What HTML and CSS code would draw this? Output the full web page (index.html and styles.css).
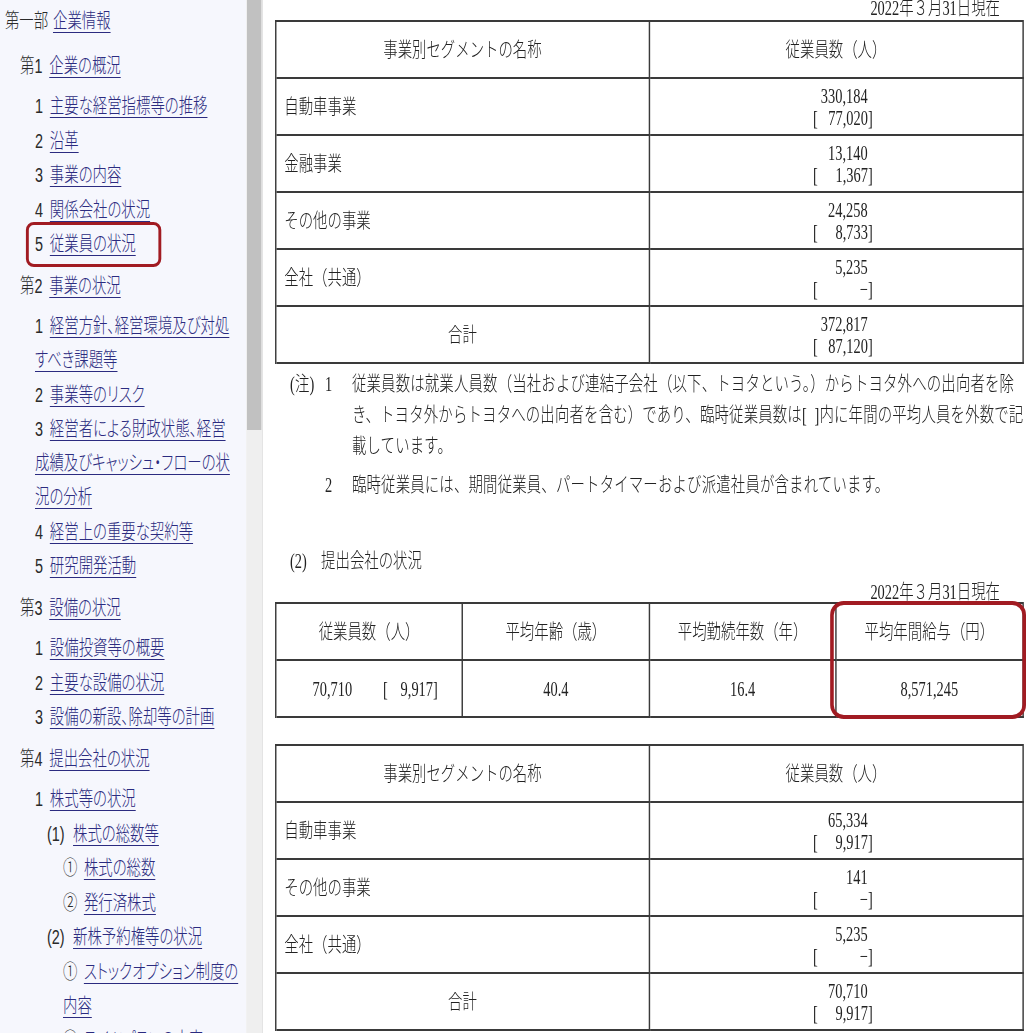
FILE: index.html
```html
<!DOCTYPE html>
<html lang="ja">
<head>
<meta charset="utf-8">
<title>従業員の状況</title>
<link rel="stylesheet" href="styles.css">
</head>
<body>
<div class="frame">
<div class="page">
  <nav class="sidebar">
    <ul class="toc">
      <li class="part"><span class="lbl lbl-part">第一部</span><a href="#">企業情報</a></li>
      <li class="sec sec-first"><span class="lbl">第1</span><a href="#">企業の概況</a></li>
      <li class="item"><span class="lbl">1</span><a href="#">主要な経営指標等の推移</a></li>
      <li class="item"><span class="lbl">2</span><a href="#">沿革</a></li>
      <li class="item"><span class="lbl">3</span><a href="#">事業の内容</a></li>
      <li class="item"><span class="lbl">4</span><a href="#">関係会社の状況</a></li>
      <li class="item current"><span class="lbl">5</span><a href="#">従業員の状況</a></li>
      <li class="sec"><span class="lbl">第2</span><a href="#">事業の状況</a></li>
      <li class="item"><span class="lbl">1</span><a href="#">経営方針、経営環境及び対処<br>すべき課題等</a></li>
      <li class="item"><span class="lbl">2</span><a href="#">事業等のリスク</a></li>
      <li class="item"><span class="lbl">3</span><a href="#">経営者による財政状態、経営<br>成績及びキャッシュ・フローの状<br>況の分析</a></li>
      <li class="item"><span class="lbl">4</span><a href="#">経営上の重要な契約等</a></li>
      <li class="item"><span class="lbl">5</span><a href="#">研究開発活動</a></li>
      <li class="sec"><span class="lbl">第3</span><a href="#">設備の状況</a></li>
      <li class="item"><span class="lbl">1</span><a href="#">設備投資等の概要</a></li>
      <li class="item"><span class="lbl">2</span><a href="#">主要な設備の状況</a></li>
      <li class="item"><span class="lbl">3</span><a href="#">設備の新設、除却等の計画</a></li>
      <li class="sec"><span class="lbl">第4</span><a href="#">提出会社の状況</a></li>
      <li class="item"><span class="lbl">1</span><a href="#">株式等の状況</a></li>
      <li class="sub"><span class="lbl lbl-paren">(1)</span><a href="#">株式の総数等</a></li>
      <li class="subsub"><span class="lbl lbl-circ">①</span><a href="#">株式の総数</a></li>
      <li class="subsub"><span class="lbl lbl-circ">②</span><a href="#">発行済株式</a></li>
      <li class="sub"><span class="lbl lbl-paren">(2)</span><a href="#">新株予約権等の状況</a></li>
      <li class="subsub"><span class="lbl lbl-circ">①</span><a href="#">ストックオプション制度の<br>内容</a></li>
      <li class="subsub"><span class="lbl lbl-circ">②</span><a href="#">ライツプランの内容</a></li>
    </ul>
  </nav>
  <div class="vscroll"><div class="thumb"></div></div>
  <main class="main">
    <p class="asof asof-top">2022年３月31日現在</p>
    <table class="grid t1">
      <tr><th>事業別セグメントの名称</th><th>従業員数（人）</th></tr>
      <tr><td class="name">自動車事業</td><td class="count"><div class="num-block"><div class="n1">330,184</div><div class="n2"><span>[</span><span>77,020]</span></div></div></td></tr>
      <tr><td class="name">金融事業</td><td class="count"><div class="num-block"><div class="n1">13,140</div><div class="n2"><span>[</span><span>1,367]</span></div></div></td></tr>
      <tr><td class="name">その他の事業</td><td class="count"><div class="num-block"><div class="n1">24,258</div><div class="n2"><span>[</span><span>8,733]</span></div></div></td></tr>
      <tr><td class="name">全社（共通）</td><td class="count"><div class="num-block"><div class="n1">5,235</div><div class="n2"><span>[</span><span>−]</span></div></div></td></tr>
      <tr><td class="total">合計</td><td class="count"><div class="num-block"><div class="n1">372,817</div><div class="n2"><span>[</span><span>87,120]</span></div></div></td></tr>
    </table>

    <div class="notes">
      <div class="note">
        <span class="note-lbl">(注)</span><span class="note-num">1</span>
        <p class="note-text">従業員数は就業人員数（当社および連結子会社（以下、トヨタという。）からトヨタ外への出向者を除<br>き、トヨタ外からトヨタへの出向者を含む）であり、臨時従業員数は[&nbsp;&nbsp;]内に年間の平均人員を外数で記<br>載しています。</p>
      </div>
      <div class="note">
        <span class="note-lbl"></span><span class="note-num">2</span>
        <p class="note-text">臨時従業員には、期間従業員、パートタイマーおよび派遣社員が含まれています。</p>
      </div>
    </div>

    <p class="subhead">(2)　提出会社の状況</p>
    <p class="asof asof-mid">2022年３月31日現在</p>
    <div class="t2wrap">
      <table class="grid t2">
        <tr><th>従業員数（人）</th><th>平均年齢（歳）</th><th>平均勤続年数（年）</th><th>平均年間給与（円）</th></tr>
        <tr>
          <td class="emp"><span class="num">70,710</span><span class="gap"></span><span class="num-block short"><span class="n2"><span>[</span><span>9,917]</span></span></span></td>
          <td class="val"><span class="num">40.4</span></td>
          <td class="val"><span class="num">16.4</span></td>
          <td class="val"><span class="num">8,571,245</span></td>
        </tr>
      </table>
    </div>

    <table class="grid t3">
      <tr><th>事業別セグメントの名称</th><th>従業員数（人）</th></tr>
      <tr><td class="name">自動車事業</td><td class="count"><div class="num-block"><div class="n1">65,334</div><div class="n2"><span>[</span><span>9,917]</span></div></div></td></tr>
      <tr><td class="name">その他の事業</td><td class="count"><div class="num-block"><div class="n1">141</div><div class="n2"><span>[</span><span>−]</span></div></div></td></tr>
      <tr><td class="name">全社（共通）</td><td class="count"><div class="num-block"><div class="n1">5,235</div><div class="n2"><span>[</span><span>−]</span></div></div></td></tr>
      <tr><td class="total">合計</td><td class="count"><div class="num-block"><div class="n1">70,710</div><div class="n2"><span>[</span><span>9,917]</span></div></div></td></tr>
    </table>
  </main>
</div>
</div>
</body>
</html>
```

FILE: styles.css
```css
html, body {
  margin: 0;
  padding: 0;
  background: #ffffff;
  overflow: hidden;
}

body {
  width: 1033px;
  height: 1033px;
}

.frame {
  width: 1033px;
  height: 1033px;
  overflow: hidden;
}

/* The whole page is laid out 1/0.72 wider and condensed horizontally,
   reproducing the tall, narrow glyphs of the reference. */
.page {
  display: flex;
  width: 1434.7px;
  min-height: 1033px;
  transform: scaleX(0.72);
  transform-origin: 0 0;
  font-family: "Liberation Serif", "Noto Sans CJK JP", serif;
  font-weight: 300;
  color: #222222;
}

/* ---------- sidebar ---------- */
.sidebar {
  position: relative;
  flex: none;
  width: 341.7px;
  background: #f6f7fd;
  font-family: "Liberation Sans", "Noto Sans CJK JP", sans-serif;
  font-size: 20px;
  font-feature-settings: "palt" 1;
  color: #2a2a2a;
}

.toc {
  list-style: none;
  margin: 0;
  padding: 4px 0 0 0;
}

.toc li {
  line-height: 34px;
  margin-bottom: 0.5px;
  white-space: nowrap;
}

.toc a {
  color: #2b2b80;
  text-decoration: underline;
  text-decoration-thickness: 1px;
  text-underline-offset: 4px;
}

.toc .part { padding-left: 6.9px; }
.toc .sec { padding-left: 27.8px; margin-top: 7.5px; margin-bottom: 6.5px; }
.toc .sec-first { margin-top: 10.5px; }
.toc .item { padding-left: 48.6px; }
.toc .sub { padding-left: 65.3px; }
.toc .subsub { padding-left: 87.5px; }

.lbl { margin-right: 9.5px; }
.lbl-part { margin-right: 6.7px; }
.lbl-paren { margin-right: 11.7px; }
.lbl-circ { margin-right: 9px; }

.current { position: relative; }
.current::after {
  content: "";
  position: absolute;
  left: 36.1px;
  top: -5px;
  width: 187.5px;
  height: 45px;
  box-sizing: border-box;
  border: 3.3px solid #a11b22;
  border-left-width: 4.6px;
  border-right-width: 4.6px;
  border-radius: 11px / 8px;
  pointer-events: none;
}

/* ---------- scrollbar ---------- */
.vscroll {
  flex: none;
  width: 23.6px;
  background: #efefef;
  border-right: 1.4px solid #d4d4d4;
  box-sizing: border-box;
}

.thumb {
  height: 430px;
  margin: 0 1.4px 0 1.4px;
  background: #c1c1c1;
}

/* ---------- main ---------- */
.main {
  flex: 1;
  min-width: 0;
  padding: 0 13.2px 0 16.6px;
  font-size: 20px;
  background: #ffffff;
}

.asof {
  margin: 0;
  text-align: right;
  line-height: 20px;
  padding-right: 32.6px;
}

.asof-top { margin-top: -2px; }
.asof-mid { margin-top: 5.5px; }

.grid {
  width: 100%;
  table-layout: fixed;
  border-collapse: separate;
  border-spacing: 0;
  border-top: 2px solid #3a3a3a;
  border-left: 2.8px solid #3a3a3a;
}

.grid tr { height: 57px; }

.grid th,
.grid td {
  padding: 0;
  border-right: 2.8px solid #3a3a3a;
  border-bottom: 2px solid #3a3a3a;
  font-weight: 300;
  vertical-align: middle;
  text-align: center;
  line-height: 24px;
}

.t1 { margin-top: 2px; }
.t3 { margin-top: 26px; }

.grid td.name {
  text-align: left;
  padding-left: 11px;
}

.grid td.count {
  padding-left: 19px;
}

.num-block {
  display: inline-block;
  width: 83px;
  font-size: 20px;
  letter-spacing: 0;
  line-height: 22px;
  text-align: right;
  vertical-align: middle;
}

.num-block .n1 { padding-right: 7px; }

.num-block .n2 {
  display: flex;
  justify-content: space-between;
}

.num-block.short {
  width: 76px;
  vertical-align: baseline;
}

.num {
  font-size: 20px;
}

.grid td.emp { padding-left: 17px; }

.gap {
  display: inline-block;
  width: 43px;
}

/* ---------- notes ---------- */
.notes {
  margin-top: 4.5px;
  padding-left: 20.8px;
  line-height: 31px;
  letter-spacing: 0.24px;
}

.note {
  display: grid;
  grid-template-columns: 48.6px 37.5px 1fr;
}

.note + .note { margin-top: 8px; }

.note-text {
  margin: 0;
  white-space: nowrap;
}

.subhead {
  margin: 45px 0 0 0;
  padding-left: 20.8px;
  line-height: 31px;
}

/* ---------- highlighted column ---------- */
.t2wrap { position: relative; }

.t2wrap::after {
  content: "";
  position: absolute;
  left: 770.8px;
  top: -1px;
  width: 272.2px;
  height: 118px;
  box-sizing: border-box;
  border: 4px solid #a11b22;
  border-left-width: 5.6px;
  border-right-width: 5.6px;
  border-radius: 19px / 14px;
  pointer-events: none;
}
```
